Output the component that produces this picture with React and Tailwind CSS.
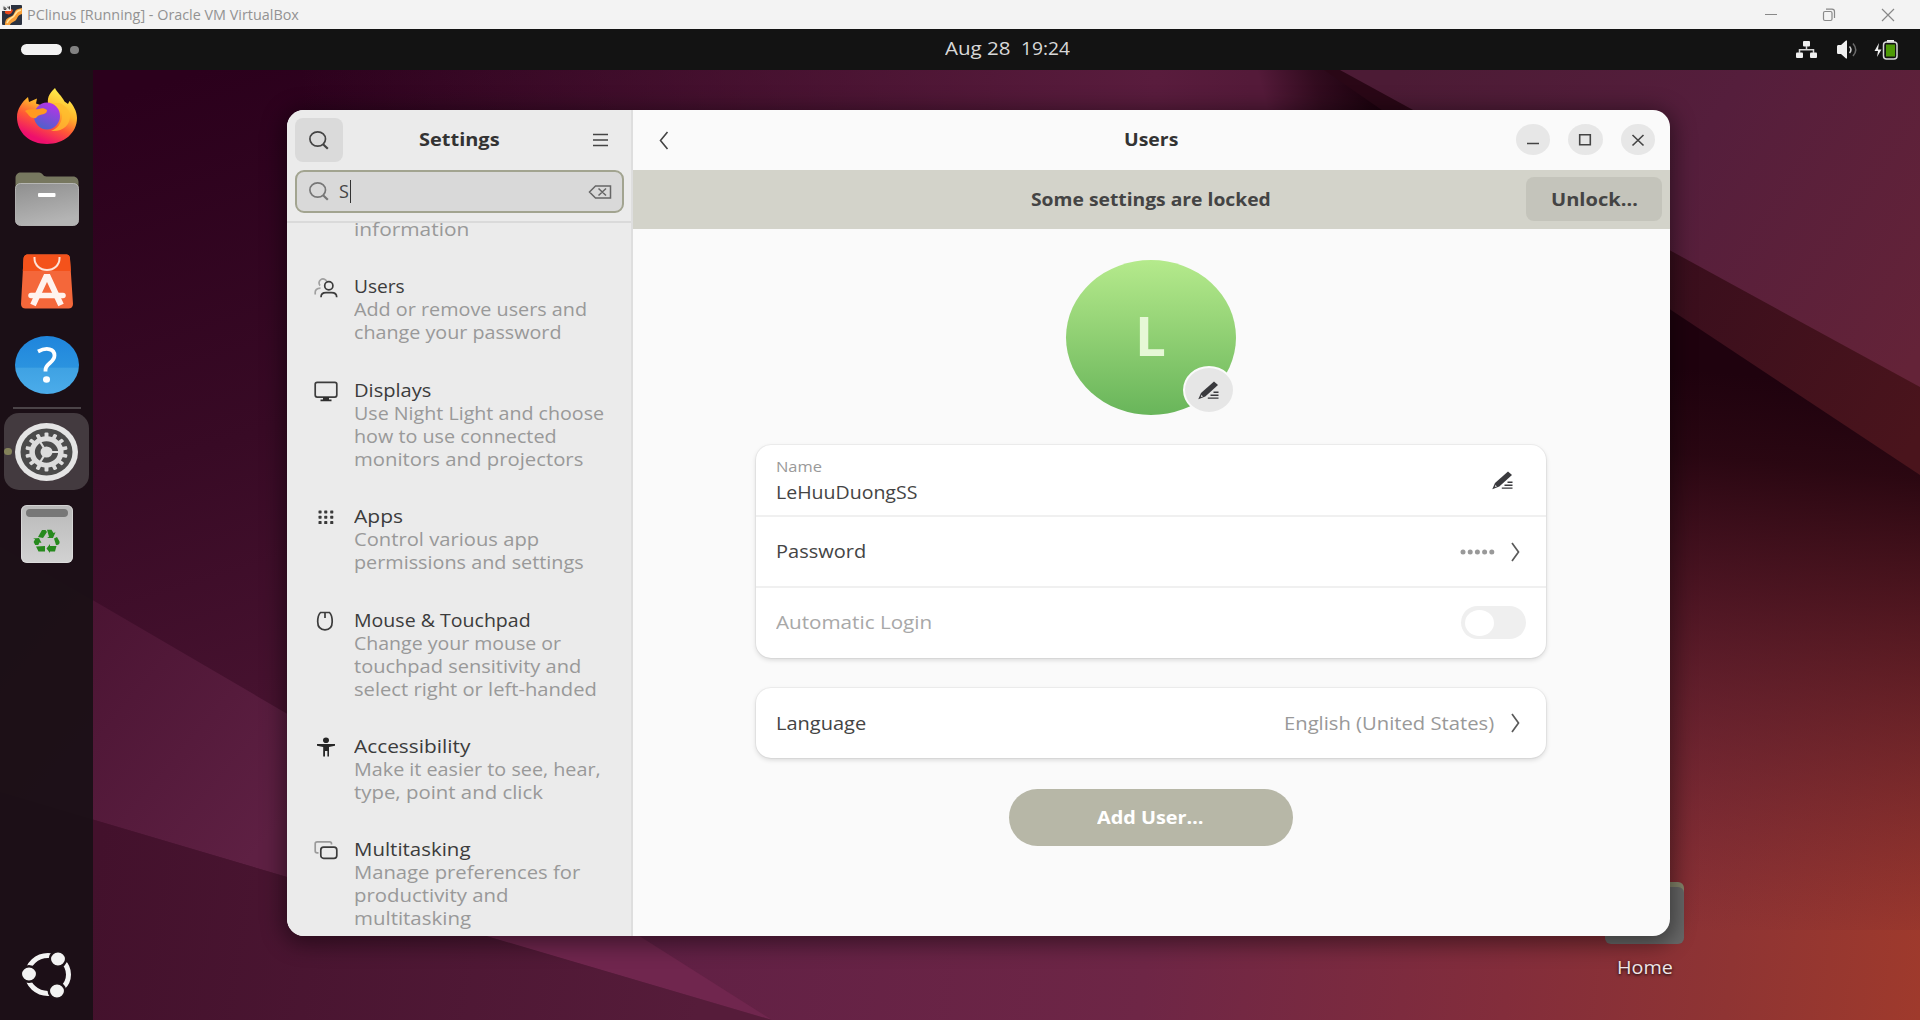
import { useLayoutEffect, useRef } from "react";

/* Text stretched horizontally to an exact advance width. */
function T({ w, className = "", children }) {
  const ref = useRef(null);
  useLayoutEffect(() => {
    const el = ref.current;
    el.style.transform = `scaleX(${w / el.offsetWidth})`;
  }, [w, children]);
  return (
    <span className={`inline-block text-left whitespace-pre ${className}`} style={{ width: w }}>
      <span ref={ref} className="inline-block origin-left">
        {children}
      </span>
    </span>
  );
}

const items = [
  { icon: null, title: null, tw: 0, lines: [["information", 115]] },
  { icon: "users", title: "Users", tw: 51, lines: [["Add or remove users and", 233], ["change your password", 208]] },
  { icon: "display", title: "Displays", tw: 77, lines: [["Use Night Light and choose", 250], ["how to use connected", 203], ["monitors and projectors", 229]] },
  { icon: "apps", title: "Apps", tw: 49, lines: [["Control various app", 185], ["permissions and settings", 230]] },
  { icon: "mouse", title: "Mouse & Touchpad", tw: 177, lines: [["Change your mouse or", 207], ["touchpad sensitivity and", 227], ["select right or left-handed", 243]] },
  { icon: "access", title: "Accessibility", tw: 117, lines: [["Make it easier to see, hear,", 247], ["type, point and click", 189]] },
  { icon: "multi", title: "Multitasking", tw: 117, lines: [["Manage preferences for", 226], ["productivity and", 155], ["multitasking", 117]] },
];

function SideIcon({ name }) {
  const p = { width: 24, height: 22, viewBox: "0 0 24 22", fill: "none", stroke: "#3c3c3c", strokeWidth: 1.7 };
  if (name === "users")
    return (
      <svg {...p}>
        <g stroke="#a0a0a0">
          <path d="M12.6 4.2A4 4 0 1 0 6 8.6M1.2 17.500v-2.200c0-2.400 2-4 5.300-4.200" />
        </g>
        <circle cx="14.800" cy="8.800" r="4.100" />
        <path d="M7 20.300c0-3.200 2.200-4.600 5-4.600h5.500c3 0 5.200 1.500 5.200 4.600" />
      </svg>
    );
  if (name === "display")
    return (
      <svg {...p}>
        <rect x="1.200" y="1.300" width="21.600" height="14.800" rx="2" />
        <path d="M9 16h6v2.500h2.500v1.800H6.500v-1.800H9z" fill="#2e2e2e" stroke="none" />
      </svg>
    );
  if (name === "apps")
    return (
      <svg {...p} stroke="none" fill="#3a3a3a">
        {[4.500, 10.200, 16.200].map((x) => [3.500, 8.800, 14.100].map((y) => <rect key={`${x}-${y}`} x={x} y={y} width="3.100" height="2.900" rx="0.600" />))}
      </svg>
    );
  if (name === "mouse")
    return (
      <svg {...p}>
        <path d="M6.500 1.500h9c1.600 1.500 2.700 5 2.700 9.300 0 5-2.700 8-7.200 8s-7.300-3-7.300-8c0-4.300 1.200-7.800 2.800-9.300ZM11 1.600v5.500" />
      </svg>
    );
  if (name === "access")
    return (
      <svg {...p} stroke="none" fill="#262626">
        <ellipse cx="12" cy="3.200" rx="3" ry="2.800" />
        <path d="M3 7h18v1.800L15 10v9.500h-1.600V14h-2.400v5.500H9.200V10L3 8.800z" />
      </svg>
    );
  return (
    <svg {...p}>
      <path d="M4.500 12.800H3.200c-1.200 0-2-.7-2-1.800V3.700c0-1.100.8-1.900 2-1.900h12.400c1.200 0 1.900.8 1.900 1.900v.8" stroke="#9a9a9a" />
      <rect x="6.800" y="7.100" width="16" height="11.200" rx="2.800" />
    </svg>
  );
}

function Magnifier({ color }) {
  return (
    <svg width="20" height="19" viewBox="0 0 20 19" fill="none" stroke={color} strokeWidth="1.700">
      <ellipse cx="8.700" cy="8" rx="7.800" ry="7.100" />
      <path d="m13.800 13 5 4.800" strokeWidth="2.200" />
    </svg>
  );
}

function Pencil() {
  return (
    <svg width="21" height="19" viewBox="0 0 21 19">
      <path d="M16 .5 20 4 7.300 15.500.3 18.300 3 12z" fill="#3a3a3e" />
      <path d="m3.300 13.700 1.800 1.700-2.300.8z" fill="#ccc" />
      <path d="M15.500 11.300H20.500M12.500 14.200h8M9.800 17.100h10.700" stroke="#3a3a3e" strokeWidth="1.400" />
    </svg>
  );
}

function Chevron() {
  return (
    <svg width="9" height="20" viewBox="0 0 9 20" fill="none" stroke="#5a5a5a" strokeWidth="1.700">
      <path d="m1 1 6.500 9L1 19" />
    </svg>
  );
}

function Wallpaper() {
  return (
    <svg className="absolute inset-0" width="1920" height="950" viewBox="0 70 1920 950" preserveAspectRatio="none">
      <defs>
        <linearGradient id="base" gradientUnits="userSpaceOnUse" x1="200" y1="70" x2="420" y2="760">
          <stop offset="0" stopColor="#2b001c" />
          <stop offset="0.500" stopColor="#380a25" />
          <stop offset="1" stopColor="#4c1533" />
        </linearGradient>
        <linearGradient id="top" gradientUnits="userSpaceOnUse" x1="300" y1="70" x2="1250" y2="70">
          <stop offset="0" stopColor="#591c3d" stopOpacity="0" />
          <stop offset="0.900" stopColor="#591c3d" />
          <stop offset="1" stopColor="#541a39" />
        </linearGradient>
        <linearGradient id="fold" gradientUnits="userSpaceOnUse" x1="1262" y1="90" x2="1365" y2="62">
          <stop offset="0" stopColor="#1c020e" stopOpacity="0" />
          <stop offset="0.500" stopColor="#1c020e" stopOpacity="0.600" />
          <stop offset="1" stopColor="#1c020e" />
        </linearGradient>
        <linearGradient id="low" gradientUnits="userSpaceOnUse" x1="640" y1="850" x2="1920" y2="1020">
          <stop offset="0" stopColor="#602045" />
          <stop offset="0.400" stopColor="#6e2646" />
          <stop offset="0.680" stopColor="#832d3b" />
          <stop offset="0.850" stopColor="#8f3433" />
          <stop offset="1" stopColor="#9f3a2c" />
        </linearGradient>
        <linearGradient id="right" gradientUnits="userSpaceOnUse" x1="1700" y1="370" x2="1640" y2="930">
          <stop offset="0" stopColor="#1f020e" />
          <stop offset="0.150" stopColor="#1f020e" stopOpacity="0.900" />
          <stop offset="0.380" stopColor="#2c0618" stopOpacity="0.680" />
          <stop offset="0.650" stopColor="#3a0c24" stopOpacity="0.400" />
          <stop offset="1" stopColor="#4a1030" stopOpacity="0" />
        </linearGradient>
        <linearGradient id="sheet" gradientUnits="userSpaceOnUse" x1="1400" y1="70" x2="1900" y2="380">
          <stop offset="0" stopColor="#4c1b35" />
          <stop offset="0.500" stopColor="#551e3c" />
          <stop offset="1" stopColor="#642338" />
        </linearGradient>
        <linearGradient id="strip" gradientUnits="userSpaceOnUse" x1="1400" y1="100" x2="1920" y2="430">
          <stop offset="0" stopColor="#2a0716" />
          <stop offset="0.500" stopColor="#390e1d" />
          <stop offset="1" stopColor="#4a141c" />
        </linearGradient>
        <linearGradient id="left" gradientUnits="userSpaceOnUse" x1="60" y1="600" x2="300" y2="800">
          <stop offset="0" stopColor="#491331" />
          <stop offset="1" stopColor="#5e2043" />
        </linearGradient>
        <linearGradient id="floor" gradientUnits="userSpaceOnUse" x1="90" y1="900" x2="700" y2="1000">
          <stop offset="0" stopColor="#43112c" />
          <stop offset="1" stopColor="#561c3a" />
        </linearGradient>
      </defs>
      <rect y="70" width="1920" height="950" fill="url(#base)" />
      <rect x="300" y="70" width="1300" height="400" fill="url(#top)" />
      <path d="M1250 70H1330L1500 190H1250z" fill="url(#fold)" />
      <path d="M640 500 1640 280H1920V1020H600z" fill="url(#low)" />
      <path d="M1640 280H1920V930H1640z" fill="url(#right)" />
      <path d="M1324 70H1500L1920 300V475L1671 310z" fill="url(#strip)" />
      <path d="M1340 70H1920V387z" fill="url(#sheet)" />
      <path d="M0 546 640 920V1000L490 937 0 792z" fill="url(#left)" />
      <path d="M420 917 622 925 772 1020z" fill="#70264e" />
      <path d="M0 792 490 937 772 1020H0z" fill="url(#floor)" />
    </svg>
  );
}

function DockIcons() {
  return (
    <>
      {/* Firefox */}
      <svg className="mt-[17px]" width="62" height="58" viewBox="0 0 62 58">
        <defs>
          <linearGradient id="fx" x1="0.750" y1="0.050" x2="0.300" y2="1">
            <stop offset="0" stopColor="#fff04d" />
            <stop offset="0.350" stopColor="#ffb52b" />
            <stop offset="0.600" stopColor="#ff5a35" />
            <stop offset="0.900" stopColor="#ee0f6d" />
          </linearGradient>
          <linearGradient id="fp" x1="0.700" y1="0" x2="0.300" y2="1">
            <stop offset="0" stopColor="#b833e8" />
            <stop offset="1" stopColor="#4b63c9" />
          </linearGradient>
        </defs>
        <path d="M39 1c1.500 4 7 8 9.500 13.500L52 17l1.500-3c3.500 4 7.500 10 7.500 17C61 46 48 57 31 57S1 46 1 30C1 22 6 15 12 10l1 5 8-3.500-1 5 9 3 3-3C31 9 35 5 39 1Z" fill="url(#fx)" />
        <ellipse cx="31" cy="29" rx="13" ry="13.500" fill="url(#fp)" />
        <path d="M9 24c5-3 10-1 14-2 3-1 5-1 8 1 0 3-2 4-7 5-4 1-3 4-6 3-5 0-6-5-9-7Z" fill="#ff9a1f" />
        <path d="M33 16c8 0 13 6 13 13s-5 13-11 15c12 1 19-6 19-15 0-7-7-12-11-13z" fill="#ffbd2e" opacity=".8" />
      </svg>
      {/* Files */}
      <svg className="mt-[27px]" width="64" height="54" viewBox="0 0 64 54">
        <defs>
          <linearGradient id="fo" x1="0" y1="0" x2="0.300" y2="1">
            <stop offset="0" stopColor="#8f8f8f" />
            <stop offset="1" stopColor="#b4b4b4" />
          </linearGradient>
        </defs>
        <path d="M.5 18V6C.5 2.500 3 .5 6 .5h18c4 0 3.500 4 7.500 4H58c3.500 0 5.500 2.500 5.500 5.500v8z" fill="#77775f" />
        <rect x=".5" y="11.500" width="63" height="42" rx="5" fill="url(#fo)" stroke="#c4c4c4" strokeWidth=".8" />
        <rect x="23" y="21" width="17.500" height="4" rx="1" fill="#fff" />
      </svg>
      {/* App Center */}
      <svg className="mt-[28px]" width="52" height="55" viewBox="0 0 52 55">
        <path d="M7 .5h38c3 0 4 2 4 4.500L52 50c0 3-2 4.500-4.500 4.500h-43C2 54.500 0 53 0 50L2.500 5C2.700 2 4 .5 7 .5Z" fill="#f4673a" />
        <path d="M7 .5h38c3 0 4 2 4 4.500l.8 12H1.800L2.500 5C2.700 2 4 .5 7 .5Z" fill="#f4521b" />
        <path d="M13.500 3v1.500C13.500 11 19 16 26 16s12.500-5 12.500-11.500V3" fill="none" stroke="#fde3d8" strokeWidth="2" />
        <path d="m12 51 13-28h2l13 28" fill="none" stroke="#fff3ee" strokeWidth="6" />
        <path d="M10 41.500h32" stroke="#fff3ee" strokeWidth="5.500" strokeLinecap="round" />
      </svg>
      {/* Help */}
      <div className="mt-[27px] flex h-[58px] w-[64px] items-center justify-center rounded-[50%] bg-[linear-gradient(#1f85dc_0%,#2b93df_54%,#3fa2e3_55%,#4bacea_100%)]">
        <svg width="22" height="38" viewBox="0 0 22 38" fill="none" stroke="#fff" strokeWidth="3.800">
          <path d="M2 5.500C11 .8 18.500 3 18.500 9.500c0 7-9 8-9 14.500v1.500" />
          <ellipse cx="10.500" cy="33.500" rx="3.500" ry="3.200" fill="#fff" stroke="none" />
        </svg>
      </div>
      <div className="mt-[13px] h-[2px] w-[68px] shrink-0 bg-[#4b4448]" />
      {/* Settings */}
      <div className="mt-[4px] flex h-[77px] w-[85px] items-center rounded-[15px] bg-[#433a3f]">
        <div className="h-[7px] w-[8px] rounded-full bg-[#84825a]" />
        <svg className="ml-[3px]" width="63" height="58" viewBox="0 0 63 58">
          <ellipse cx="31.500" cy="29" rx="31.500" ry="29" fill="#e4e4e4" />
          <ellipse cx="31.500" cy="29" rx="26" ry="23.500" fill="#4b4b4b" />
          <g transform="translate(31.500 29) scale(1.090 1)">
            {Array.from({ length: 14 }, (_, i) => (
              <rect key={i} x="-1.800" y="-19.500" width="3.600" height="8" rx="1" fill="#dcdcdc" transform={`rotate(${(i * 360) / 14})`} />
            ))}
            <circle r="13.200" fill="none" stroke="#dcdcdc" strokeWidth="5" />
            <circle r="5.500" fill="#dcdcdc" />
            {[0, 120, 240].map((a) => (
              <path key={a} d="M5 0h8" stroke="#dcdcdc" strokeWidth="2" transform={`rotate(${a})`} />
            ))}
          </g>
        </svg>
      </div>
      {/* Trash */}
      <div className="mt-[15px] flex h-[58px] w-[52px] flex-col items-center rounded-[6px] bg-[linear-gradient(#b9b9b9,#d2d2d2)] pt-[4px] ring-1 ring-[#e2e2e2]/60 ring-inset">
        <div className="h-[8px] w-[42px] rounded-[4px] bg-[#777]" />
        <svg className="mt-[12px]" width="27" height="24" viewBox="0 0 27 24" fill="#278a1e">
          <path d="m5 8 4-7h3.500L14 3 10 9zM14 .8h4.500L20.500 4l2-.8L20 9h-6l2-1.300zM21 9.500l3-1.500 2.500 4.500c.5 2-.8 3.500-2.500 3.500h-1zM23.500 17 22 22.500h-5V24l-3.500-4.500L17 15v2zM12 17v5.500H5.500L3 17.500zM0 9.500 6 9l2.500 5-2-.6-1.200 2.600H2.200L.6 13l1.500-2.700z" />
        </svg>
      </div>
      {/* Ubuntu */}
      <svg className="mt-auto mb-[21px]" width="52" height="48" viewBox="0 0 52 48" preserveAspectRatio="none">
        <ellipse cx="27" cy="23.500" rx="20.500" ry="19" fill="none" stroke="#f3f3f3" strokeWidth="5" />
        <g fill="#f3f3f3" stroke="#1d1218" strokeWidth="2.500">
          <ellipse cx="8" cy="23" rx="8.200" ry="7.800" />
          <ellipse cx="37" cy="8" rx="8.200" ry="7.800" />
          <ellipse cx="36" cy="40" rx="8.200" ry="7.800" />
        </g>
      </svg>
    </>
  );
}

export default function App() {
  return (
    <div className="flex h-[1020px] w-[1920px] flex-col overflow-hidden font-['Open_Sans','Noto_Sans',sans-serif] text-[18px] leading-[23px] text-[#444]">
      {/* Host window title bar */}
      <header className="flex h-[29px] shrink-0 items-center bg-[#f3f3f3] text-[#929292]">
        <svg className="ml-[2px]" width="20" height="20" viewBox="0 0 20 20">
          <rect width="20" height="20" rx="1" fill="#2b3240" />
          <path d="M3 20c0-7 3-7 7-9 3-2 2-6 6-7l4-1v6c-4 1-4 3-6 6-2 2-5 2-6 5z" fill="#f9a13a" />
          <path d="M5 18c2-5 4-4 7-7 2-3 2-5 7-6" stroke="#ffe6a0" strokeWidth="1.500" fill="none" />
          <path d="M3 8c4 3 7 1 8-3l-2-1-6 1z" fill="#e8481c" />
          <rect width="9" height="6" fill="#eee" />
          <path d="M2 1.500v3h2v-1.500H2M6 1.500v1.500h1.500V1.500v3" stroke="#333" fill="none" strokeWidth=".9" />
        </svg>
        <div className="ml-[5px] text-[14px]">
          <T w={272}>PClinus [Running] - Oracle VM VirtualBox</T>
        </div>
        <svg className="mr-[25px] ml-auto" width="130" height="14" viewBox="0 0 130 14" fill="none" stroke="#888" strokeWidth="1.200">
          <path d="M0 6.500h12M117 1l12 12M129 1l-12 12" />
          <rect x="58.500" y="3.500" width="8.500" height="9" rx="1.500" />
          <path d="M61 1.200h6c1.600 0 2.500.9 2.500 2.500v6.300" />
        </svg>
      </header>

      {/* Guest top bar */}
      <div className="grid h-[41px] shrink-0 grid-cols-[1fr_auto_1fr] items-center bg-[#131313]">
        <div className="flex items-center gap-[8px] pl-[21px]">
          <div className="h-[11px] w-[41px] rounded-full bg-[#f2f2f2]" />
          <div className="h-[8px] w-[9px] rounded-full bg-[#828282]" />
        </div>
        <div className="flex gap-[11px] pb-[3px] pl-[95px] text-[#d8d8d8]">
          <T w={65}>Aug 28</T>
          <T w={49}>19:24</T>
        </div>
        <div className="flex items-center justify-end pr-[21px]">
          <svg width="104" height="20" viewBox="0 0 104 20">
            <g fill="#f0f0f0">
              <rect x="8" y="1" width="7" height="5.500" rx="1" />
              <rect x="1" y="12.500" width="7" height="5.500" rx="1" />
              <rect x="15" y="12.500" width="7" height="5.500" rx="1" />
              <path d="M42 6.500c0-1 .7-1.500 1.500-1.500H46l5-4.500h1v18h-1L46 14h-2.500c-.8 0-1.500-.5-1.500-1.500z" />
              <path d="m84 3-4.500 8H83l-1 6 4.500-7.500H83z" />
              <rect x="92" y="0" width="7" height="2.500" />
            </g>
            <g fill="none" strokeWidth="1.500">
              <path d="M4.500 13V9.800h14V13M11.500 6v4" stroke="#d5d5d5" />
              <path d="M54.500 6.500c1.800 2 1.800 4.500 0 6.500" stroke="#ccc" />
              <path d="M58 3.500c3.500 4 3.500 8.500 0 12.500" stroke="#6a6a6a" />
              <rect x="88.500" y="2" width="13.500" height="17" rx="3" stroke="#d8d8d8" />
            </g>
            <rect x="91" y="4.500" width="9" height="12" fill="#4e9a06" />
          </svg>
        </div>
      </div>

      {/* Desktop */}
      <main className="relative flex min-h-0 flex-1">
        <Wallpaper />
        <aside className="relative flex w-[93px] shrink-0 flex-col items-center bg-[#1a1016]/95">
          <DockIcons />
        </aside>

        {/* Home folder on the desktop */}
        <div className="absolute top-[811px] left-[1594px] flex w-[101px] flex-col items-center">
          <svg width="79" height="64" viewBox="0 0 79 64">
            <rect x="0" y="1" width="79" height="40" rx="6" fill="#85856b" />
            <rect x="0" y="6" width="79" height="57" rx="6" fill="#686868" />
          </svg>
          <div className="mt-[11px] text-[#f0e6e8] [text-shadow:0_1px_3px_#000]">
            <T w={56}>Home</T>
          </div>
        </div>

        {/* Settings window */}
        <section className="absolute top-[40px] left-[287px] flex h-[826px] w-[1383px] overflow-hidden rounded-[17px] bg-[#fafafa] shadow-[0_4px_22px_4px_rgba(0,0,0,0.45)]">
          <nav className="flex w-[346px] shrink-0 flex-col border-r-2 border-[#dedede] bg-[#ebebeb]">
            <div className="flex h-[113px] shrink-0 flex-col border-b-2 border-[#dadada] px-[8px] pt-[8px]">
              <div className="flex h-[44px] items-center">
                <button className="flex h-[44px] w-[48px] items-center justify-center rounded-[8px] bg-[#dadada]">
                  <Magnifier color="#444" />
                </button>
                <div className="flex-1 pb-px text-center font-bold text-[#333]">
                  <T w={81}>Settings</T>
                </div>
                <svg className="mr-[15px] ml-[17px]" width="15" height="14" viewBox="0 0 15 14" stroke="#444" strokeWidth="1.500">
                  <path d="M0 1.500h15M0 7h15M0 12.500h15" />
                </svg>
              </div>
              <div className="mt-[8px] flex h-[43px] w-[329px] items-center rounded-[9px] border-2 border-[#a2a490] bg-[#d9d9d9] px-[12px]">
                <Magnifier color="#777" />
                <span className="ml-[10px] text-[18px] text-[#444]">S</span>
                <div className="ml-px h-[23px] w-[1.500px] bg-[#333]" />
                <svg className="-mr-[2px] ml-auto" width="24" height="14" viewBox="0 0 24 14" fill="none" stroke="#666" strokeWidth="1.500">
                  <path d="M7.500 1h15v12h-15L1.500 7zM10.500 3.500l7.500 7M18 3.500l-7.500 7" />
                </svg>
              </div>
            </div>
            <div className="flex min-h-0 flex-1 flex-col gap-[34.400px]">
              {items.map((it, i) => (
                <div key={i} className={it.icon ? "flex shrink-0 pl-[27px]" : "flex h-[18px] shrink-0 items-end pl-[27px]"}>
                  <div className="w-[40px] shrink-0 pt-[2px]">{it.icon && <SideIcon name={it.icon} />}</div>
                  <div className="flex flex-col items-start text-[#999]">
                    {it.title && <T w={it.tw} className="text-[#3c3c3c]">{it.title}</T>}
                    {it.lines.map(([s, w]) => (
                      <T key={s} w={w}>{s}</T>
                    ))}
                  </div>
                </div>
              ))}
            </div>
          </nav>

          <div className="flex min-w-0 flex-1 flex-col">
            <div className="grid h-[60px] shrink-0 grid-cols-[1fr_auto_1fr] items-center pr-px">
              <svg className="ml-[26px]" width="10" height="19" viewBox="0 0 10 19" fill="none" stroke="#444" strokeWidth="1.600">
                <path d="M8.500 1 1.500 9.500l7 8.500" />
              </svg>
              <T w={54} className="pb-px font-bold text-[#333]">Users</T>
              <div className="flex justify-end gap-[18px] pr-[14px] pb-px">
                {["M6 15.500h12", "M6.700 6.700h10.600v10H6.700z", "m6.500 7 11 10.500m0-10.500-11 10.500"].map((d) => (
                  <button key={d} className="flex h-[31px] w-[34.500px] items-center justify-center rounded-[50%] bg-[#e7e7e7]">
                    <svg width="24" height="24" viewBox="0 0 24 24" fill="none" stroke="#444" strokeWidth="1.600">
                      <path d={d} />
                    </svg>
                  </button>
                ))}
              </div>
            </div>
            <div className="grid h-[59px] shrink-0 grid-cols-[1fr_auto_1fr] items-center bg-[#d3d3ca] pr-[8px] pl-[7px]">
              <span />
              <T w={240} className="pb-px font-bold">Some settings are locked</T>
              <button className="mb-px flex h-[44px] w-[136px] items-center justify-center justify-self-end rounded-[8px] bg-[#c4c4bb] font-bold">
                <T w={87}>Unlock…</T>
              </button>
            </div>

            <div className="flex flex-col items-center pt-[31px] pr-[2px]">
              <div className="relative flex h-[155px] w-[170px] items-center justify-center rounded-[50%] bg-linear-to-b from-[#b5ea8c] to-[#68b55a]">
                <span className="pb-[4px] text-[53px] leading-none font-bold text-[#e6f8d6]">
                  <T w={31}>L</T>
                </span>
                <div className="absolute top-[106px] left-[117px] flex h-[48px] w-[52px] items-center justify-center rounded-[50%] border-2 border-[#fafafa] bg-[#e6e6e6]">
                  <Pencil />
                </div>
              </div>

              <div className="mt-[30px] flex h-[213px] w-[790px] flex-col rounded-[15px] bg-white shadow-[0_0_0_1px_rgba(0,0,0,0.04),0_2px_5px_rgba(0,0,0,0.14)]">
                <div className="flex h-[72px] items-center justify-between border-b-2 border-[#f0f0f0] pr-[33px] pl-[20px]">
                  <div className="flex flex-col items-start pb-px">
                    <T w={46} className="text-[15px] text-[#999]">Name</T>
                    <T w={141} className="mt-[3px]">LeHuuDuongSS</T>
                  </div>
                  <Pencil />
                </div>
                <div className="flex h-[71px] items-center border-b-2 border-[#f0f0f0] pr-[26px] pl-[20px]">
                  <T w={90}>Password</T>
                  <svg className="mr-[16px] ml-auto" width="35" height="6" viewBox="0 0 35 6" fill="#999">
                    {[3, 10.200, 17.400, 24.600, 31.800].map((x) => (
                      <circle key={x} cx={x} cy="3" r="2.500" />
                    ))}
                  </svg>
                  <Chevron />
                </div>
                <div className="flex h-[70px] items-center justify-between pr-[20px] pb-px pl-[20px] text-[#a8a8a8]">
                  <T w={156}>Automatic Login</T>
                  <div className="flex h-[33px] w-[65px] items-center rounded-full bg-[#efefef] pl-[4px]">
                    <div className="h-[26px] w-[29px] rounded-[50%] bg-white" />
                  </div>
                </div>
              </div>

              <div className="mt-[30px] flex h-[70px] w-[790px] items-center rounded-[15px] bg-white pr-[26px] pl-[20px] shadow-[0_0_0_1px_rgba(0,0,0,0.04),0_2px_5px_rgba(0,0,0,0.14)]">
                <T w={90}>Language</T>
                <T w={210} className="mr-[17px] ml-auto text-[#999]">English (United States)</T>
                <Chevron />
              </div>

              <button className="mt-[31px] flex h-[57px] w-[284px] items-center justify-center rounded-full bg-[#b7b7a7] font-bold text-white">
                <T w={107}>Add User…</T>
              </button>
            </div>
          </div>
        </section>
      </main>
    </div>
  );
}
